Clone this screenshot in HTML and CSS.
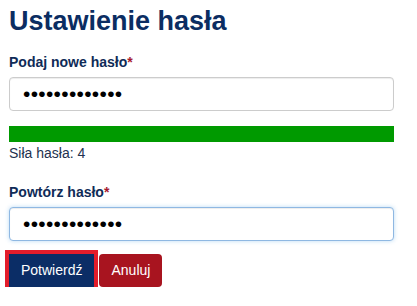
FILE: index.html
```html
<!DOCTYPE html>
<html lang="pl">
<head>
<meta charset="utf-8">
<title>Ustawienie hasła</title>
<link rel="stylesheet" href="styles.css">
</head>
<body>
<main class="page">
  <h1 class="title">Ustawienie hasła</h1>
  <form class="form">
    <div class="field">
      <label class="label" for="pw1">Podaj nowe hasło<span class="req">*</span></label>
      <input class="control" id="pw1" type="password" value="abcdefghijklm">
    </div>
    <div class="strength">
      <div class="strength-bar"></div>
      <div class="strength-text">Siła hasła: 4</div>
    </div>
    <div class="field field-second">
      <label class="label" for="pw2">Powtórz hasło<span class="req">*</span></label>
      <input class="control control-focus" id="pw2" type="password" value="abcdefghijklm">
    </div>
    <div class="actions">
      <button type="button" class="btn btn-primary btn-focus">Potwierdź</button>
      <button type="button" class="btn btn-danger">Anuluj</button>
    </div>
  </form>
</main>
</body>
</html>
```
FILE: styles.css
```css
html, body {
  margin: 0;
  padding: 0;
  background: #ffffff;
}
body {
  font-family: "Liberation Sans", Arial, sans-serif;
  font-size: 14px;
  color: #23324f;
}
.page {
  width: 385px;
  padding: 0 0 0 9px;
}
.title {
  margin: 4px 0 0;
  font-size: 27px;
  line-height: 34px;
  font-weight: bold;
  color: #0b2d62;
}
.form {
  display: flex;
  flex-direction: column;
}
.field {
  display: flex;
  flex-direction: column;
  margin-top: 14px;
}
.field-second {
  margin-top: 19px;
}
.label {
  font-size: 14px;
  line-height: 20px;
  font-weight: bold;
  color: #0f2b57;
  margin-bottom: 5px;
}
.req {
  color: #a6192e;
}
.control {
  box-sizing: border-box;
  width: 385px;
  height: 34px;
  margin: 0;
  padding: 0 12px 0 13px;
  border: 1px solid #cccccc;
  border-radius: 4px;
  background: #ffffff;
  box-shadow: inset 0 1px 1px rgba(0, 0, 0, 0.075);
  font-family: "Liberation Sans", Arial, sans-serif;
  font-size: 21px;
  letter-spacing: 0.3px;
  color: #000000;
  outline: none;
}
.control-focus {
  border-color: #8fb8e2;
  box-shadow: inset 0 1px 1px rgba(0, 0, 0, 0.075), 0 0 4px rgba(102, 175, 233, 0.45);
}
.strength {
  margin-top: 15px;
}
.strength-bar {
  width: 385px;
  height: 16px;
  background: #009a00;
}
.strength-text {
  margin-top: 1px;
  line-height: 20px;
  font-size: 14px;
  color: #23324f;
}
.actions {
  display: flex;
  gap: 5px;
  margin-top: 13px;
}
.btn {
  font-family: "Liberation Sans", Arial, sans-serif;
  font-size: 14px;
  line-height: 20px;
  padding: 6px 12px 7px;
  border: none;
  border-radius: 4px;
  color: #ffffff;
  cursor: pointer;
}
.btn-primary {
  background: #0b2d66;
  border-radius: 0;
}
.btn-focus {
  outline: 4px solid #e31d2b;
  outline-offset: 0;
}
.btn-danger {
  background: #a8141f;
}
```
